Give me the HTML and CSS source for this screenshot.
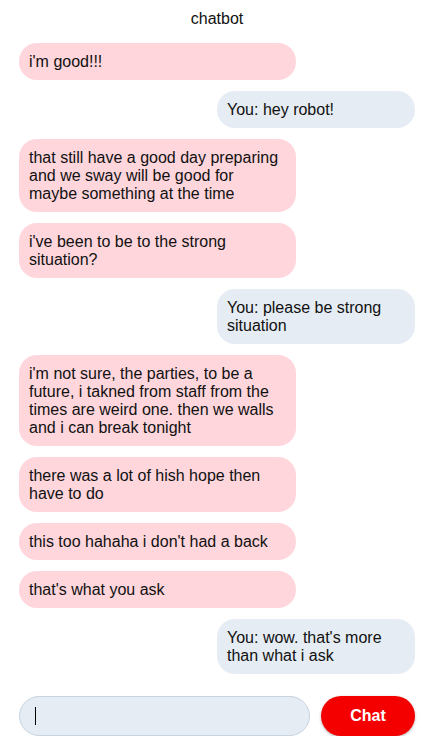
FILE: index.html
```html
<!DOCTYPE html>
<html>
<head>
<meta charset="utf-8">
<link rel="stylesheet" href="styles.css">
</head>
<body>
<div class="app">
  <div class="title">chatbot</div>
  <div class="messages">
    <div class="msg bot">i'm good!!!</div>
    <div class="msg user">You: hey robot!</div>
    <div class="msg bot">that still have a good day preparing and we sway will be good for maybe something at the time</div>
    <div class="msg bot">i've been to be to the strong situation?</div>
    <div class="msg user">You: please be strong situation</div>
    <div class="msg bot">i'm not sure, the parties, to be a future, i takned from staff from the times are weird one. then we walls and i can break tonight</div>
    <div class="msg bot">there was a lot of hish hope then have to do</div>
    <div class="msg bot">this too hahaha i don't had a back</div>
    <div class="msg bot">that's what you ask</div>
    <div class="msg user">You: wow. that's more than what i ask</div>
  </div>
  <div class="composer">
    <div class="input"><span class="caret"></span></div>
    <button class="send">Chat</button>
  </div>
</div>
</body>
</html>
```
FILE: styles.css
```css
html, body {
  margin: 0;
  padding: 0;
  background: #ffffff;
}
body {
  font-family: "Liberation Sans", Arial, sans-serif;
  font-size: 16px;
  color: #111;
}
.app {
  padding: 0 18px 0 19px;
}
.title {
  text-align: center;
  line-height: 18px;
  padding-top: 10px;
  height: 43px;
  box-sizing: border-box;
}
.messages {
  display: flex;
  flex-direction: column;
  gap: 11px;
}
.msg {
  line-height: 18px;
  padding: 9.5px 12px 9.5px 10px;
  border-radius: 18px;
  box-sizing: border-box;
}
.bot {
  width: 70%;
  background: #ffd6dc;
  align-self: flex-start;
}
.user {
  width: 50%;
  background: #e5ecf3;
  align-self: flex-end;
}
.composer {
  display: flex;
  gap: 11px;
  margin-top: 22px;
}
.input {
  flex: 1;
  height: 40px;
  box-sizing: border-box;
  background: #e5ecf3;
  border: 1px solid #c6d4e1;
  border-radius: 20px;
  display: flex;
  align-items: center;
  padding-left: 15px;
}
.caret {
  width: 1px;
  height: 18px;
  background: #000;
}
.send {
  width: 94px;
  height: 40px;
  border: none;
  border-radius: 20px;
  background: #f50000;
  color: #fff;
  font-family: "Liberation Sans", Arial, sans-serif;
  font-size: 16px;
  font-weight: bold;
  box-shadow: 0 1px 3px rgba(0,0,0,0.3);
  padding: 0;
}
```
